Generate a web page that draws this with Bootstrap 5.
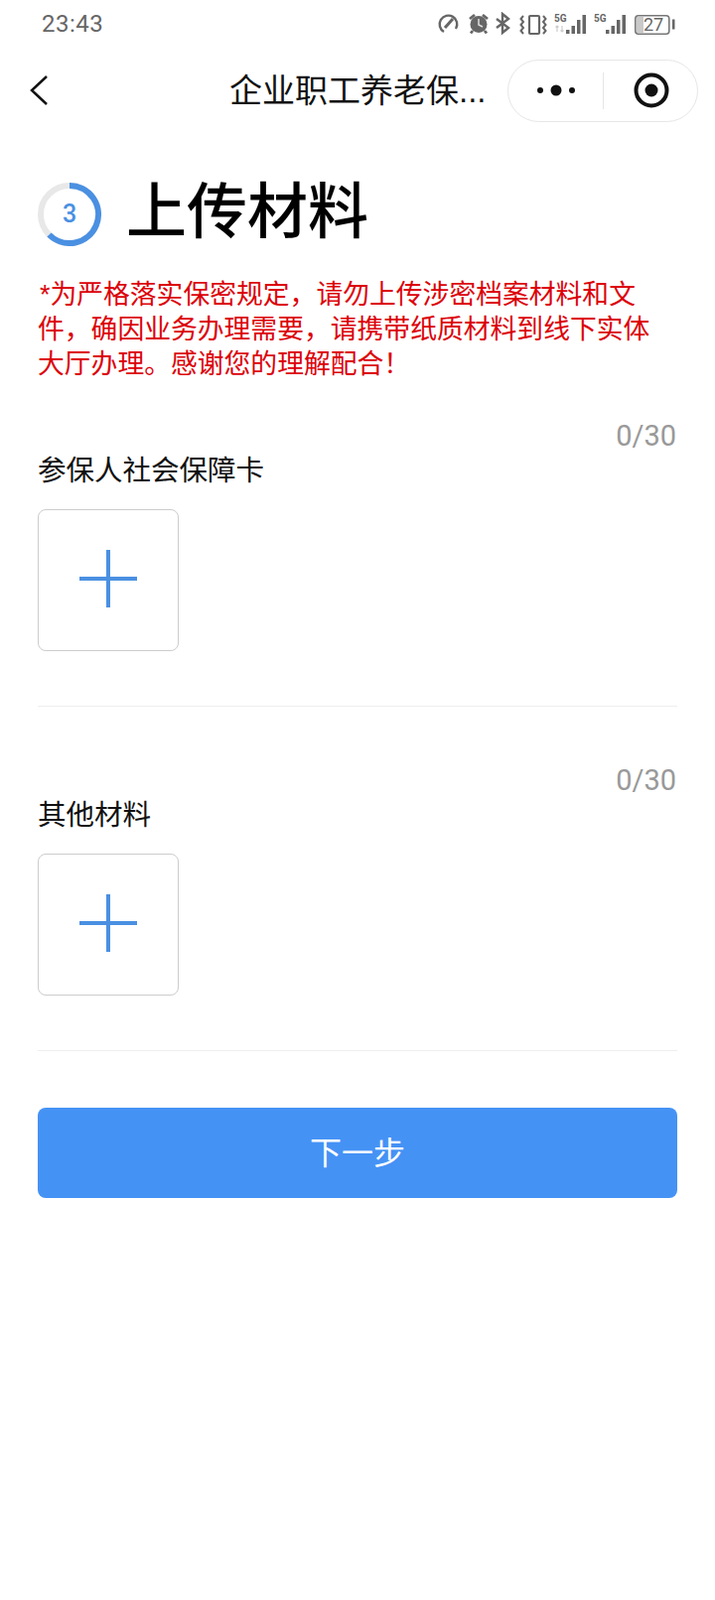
<!DOCTYPE html>
<html lang="zh-CN">
<head>
  <meta charset="UTF-8" />
  <meta name="viewport" content="width=device-width, initial-scale=1.0"/>
  <title>上传材料</title>
  <link href="https://cdn.jsdelivr.net/npm/bootstrap@5.3.0/dist/css/bootstrap.min.css" rel="stylesheet">
  <style>
    body {
      background-color: #fff;
      font-family: "Liberation Sans", "Noto Sans CJK SC", sans-serif;
    }
    .status-bar {
      height: 48px;
      padding: 0 38px 0 42px;
      color: #666;
    }
    .status-time {
      font-family: Roboto, sans-serif;
      font-size: 24px;
      letter-spacing: .5px;
      line-height: 1;
    }
    .top-nav {
      height: 74px;
      margin-top: 6px;
      padding-right: 16px;
    }
    .back-btn {
      margin-left: 29px;
      width: 22px;
    }
    .nav-title {
      width: 259px;
      margin-left: 180px;
      font-size: 33px;
      color: #111;
      white-space: nowrap;
      line-height: 1;
    }
    .capsule {
      width: 192px;
      height: 63px;
      margin-left: 21px;
      border: 1px solid #e6e6e6;
      border-radius: 32px;
    }
    .capsule-part {
      width: 95px;
    }
    .capsule-dots {
      padding-left: 4px;
    }
    .capsule-target {
      padding-left: 3px;
    }
    .capsule-line {
      width: 1px;
      height: 37px;
      background: #e6e6e6;
    }
    .page-body {
      padding: 0 38px;
    }
    .step-head {
      margin-top: 55px;
      height: 66px;
    }
    .step-ring {
      position: relative;
      width: 64px;
      height: 64px;
    }
    .step-num {
      position: absolute;
      inset: 0;
      color: #4a90e2;
      font-family: Roboto, sans-serif;
      font-size: 25px;
      font-weight: 500;
    }
    .step-title {
      margin: 0 0 4px 25px;
      font-size: 61px;
      font-weight: 500;
      line-height: 1;
      color: #000;
    }
    .notice {
      margin: 31px 0 0;
      max-width: 626px;
      color: #dc0008;
      font-size: 26.8px;
      line-height: 35px;
      text-indent: 2px;
    }
    .upload-sec {
      border-bottom: 1px solid #eee;
      height: 290px;
      margin-bottom: 57px;
    }
    .upload-first {
      margin-top: 37px;
    }
    .upload-count {
      margin-right: 1px;
      color: #999;
      font-family: Roboto, sans-serif;
      font-size: 29px;
      line-height: 35px;
    }
    .upload-label {
      color: #111;
      font-size: 28.5px;
      line-height: 34px;
    }
    .upload-box {
      width: 142px;
      height: 143px;
      margin-top: 22px;
      padding-bottom: 4px;
      border: 1px solid #ccc;
      border-radius: 8px;
    }
    .next-btn {
      height: 91px;
      background: #4592f5;
      border: 0;
      border-radius: 8px;
      color: #fff;
      font-size: 32px;
    }
    .next-btn:hover {
      background: #4592f5;
      color: #fff;
    }
  </style>
</head>
<body>

  <!-- Status bar -->
  <div class="status-bar d-flex justify-content-between align-items-center">
    <span class="status-time">23:43</span>
    <!-- viewBox uses screen coordinates -->
    <svg width="242" height="24" viewBox="440 12 242 24">
      <!-- gauge -->
      <g fill="none" stroke="#666" stroke-width="2.400">
        <path d="M447 32a8.800 8.800 0 1 1 12-3"/>
        <path d="M448 28l8-9" stroke-width="3"/>
      </g>
      <!-- alarm -->
      <circle cx="482" cy="24.500" r="8.500" fill="#666"/>
      <path d="M482 19v6l4 2" fill="none" stroke="#ddd" stroke-width="1.500"/>
      <path d="M473 19l5-4M491 19l-5-4M476 31l-2 2.500M488 31l2 2.500" stroke="#666" stroke-width="2.800" fill="none"/>
      <!-- bluetooth -->
      <path d="M500 19l12 9-6 5V14l6 5-12 9" fill="none" stroke="#666" stroke-width="2.400"/>
      <!-- vibrate -->
      <rect x="533" y="16" width="10" height="18" rx="1" fill="none" stroke="#666" stroke-width="2.200"/>
      <path d="M527 16l-2.500 3 2.500 3-2.500 3 2.500 3-2.500 3 2.500 3M547 16l2.500 3-2.500 3 2.500 3-2.500 3 2.500 3-2.500 3" fill="none" stroke="#666" stroke-width="2"/>
      <!-- signal 1 -->
      <text x="558" y="22" font-family="Roboto, sans-serif" font-size="10" font-weight="700" fill="#666">5G</text>
      <path d="M561 32v-6m-1.500 1.500l1.500-1.500 1.500 1.500M566 26v6m-1.500-1.500l1.500 1.500 1.500-1.500" fill="none" stroke="#ccc" stroke-width="1.200"/>
      <path d="M570 30h3.500v4h-3.500zM575.500 26h3.500v8h-3.500zM581 20h3.500v14h-3.500zM586.500 15h3.500v19h-3.500z" fill="#666"/>
      <!-- signal 2 -->
      <text x="598" y="22" font-family="Roboto, sans-serif" font-size="10" font-weight="700" fill="#666">5G</text>
      <path d="M610 30h3.500v4h-3.500zM615.500 26h3.500v8h-3.500zM621 20h3.500v14h-3.500zM626.500 15h3.500v19h-3.500z" fill="#666"/>
      <!-- battery -->
      <rect x="639.800" y="15.800" width="34" height="18.400" rx="3" fill="none" stroke="#777" stroke-width="1.600"/>
      <rect x="641" y="17" width="7" height="16" fill="#c9c9c9"/>
      <text x="658" y="31" text-anchor="middle" font-family="Roboto, sans-serif" font-size="18" fill="#666">27</text>
      <rect x="677" y="19.500" width="2.500" height="10" fill="#666"/>
    </svg>
  </div>

  <!-- Title bar -->
  <div class="top-nav d-flex align-items-center">
    <div class="back-btn">
      <svg width="22" height="32" viewBox="0 0 22 32"><path d="M18 2L3 16l15 14" fill="none" stroke="#111" stroke-width="2.500"/></svg>
    </div>
    <div class="nav-title">企业职工养老保...</div>
    <div class="capsule d-flex align-items-center flex-shrink-0">
      <div class="capsule-part capsule-dots d-flex justify-content-center">
        <svg width="40" height="12" viewBox="0 0 40 12">
          <circle cx="3" cy="6" r="3" fill="#111"/><circle cx="19" cy="6" r="5.500" fill="#111"/><circle cx="35" cy="6" r="3" fill="#111"/>
        </svg>
      </div>
      <div class="capsule-line"></div>
      <div class="capsule-part capsule-target d-flex justify-content-center">
        <svg width="36" height="36" viewBox="0 0 36 36">
          <circle cx="18" cy="18" r="15.500" fill="none" stroke="#111" stroke-width="4"/><circle cx="18" cy="18" r="6.500" fill="#111"/>
        </svg>
      </div>
    </div>
  </div>

  <div class="page-body">
    <!-- Step heading -->
    <div class="step-head d-flex align-items-center">
      <div class="step-ring flex-shrink-0">
        <svg width="64" height="64" viewBox="0 0 64 64">
          <circle cx="32" cy="32" r="29" fill="none" stroke="#e8e8e8" stroke-width="6"/>
          <path d="M32 3a29 29 0 1 1-20.500 49.500" fill="none" stroke="#4a90e2" stroke-width="6"/>
        </svg>
        <div class="step-num d-flex align-items-center justify-content-center">3</div>
      </div>
      <h1 class="step-title">上传材料</h1>
    </div>

    <p class="notice">*为严格落实保密规定，请勿上传涉密档案材料和文件，确因业务办理需要，请携带纸质材料到线下实体大厅办理。感谢您的理解配合！</p>

    <!-- Upload sections -->
    <div class="upload-sec upload-first">
      <div class="upload-count text-end">0/30</div>
      <div class="upload-label">参保人社会保障卡</div>
      <div class="upload-box d-flex align-items-center justify-content-center">
        <svg width="58" height="58" viewBox="0 0 58 58"><path d="M0 29h58M29 0v58" stroke="#4a90e2" stroke-width="4"/></svg>
      </div>
    </div>
    <div class="upload-sec">
      <div class="upload-count text-end">0/30</div>
      <div class="upload-label">其他材料</div>
      <div class="upload-box d-flex align-items-center justify-content-center">
        <svg width="58" height="58" viewBox="0 0 58 58"><path d="M0 29h58M29 0v58" stroke="#4a90e2" stroke-width="4"/></svg>
      </div>
    </div>

    <button class="btn next-btn w-100 d-block">下一步</button>
  </div>

</body>
</html>
